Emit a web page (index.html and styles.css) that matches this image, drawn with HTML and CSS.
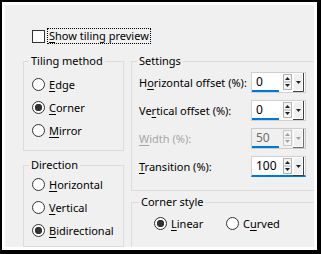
FILE: index.html
```html
<!DOCTYPE html>
<html lang="en">
<head>
    <meta charset="UTF-8">
    <title>Tiling</title>
    <link rel="stylesheet" href="styles.css">
</head>
<body>

    <div class="frame">
        <div class="panel">

            <div class="check-row">
                <span class="checkbox"></span>
                <span class="focus"><u>S</u>how tiling preview</span>
            </div>

            <div class="groups">
                <div class="col">
                    <fieldset class="group tiling">
                        <legend>Tiling method</legend>
                        <div class="radio-row"><span class="radio"></span><span><u>E</u>dge</span></div>
                        <div class="radio-row"><span class="radio on"></span><span><u>C</u>orner</span></div>
                        <div class="radio-row"><span class="radio"></span><span><u>M</u>irror</span></div>
                    </fieldset>

                    <fieldset class="group direction">
                        <legend>Direction</legend>
                        <div class="radio-row"><span class="radio"></span><span><u>H</u>orizontal</span></div>
                        <div class="radio-row"><span class="radio"></span><span><u>V</u>ertical</span></div>
                        <div class="radio-row"><span class="radio on"></span><span><u>B</u>idirectional</span></div>
                    </fieldset>
                </div>

                <div class="col right">
                    <fieldset class="group settings">
                        <legend>Settings</legend>

                        <div class="field">
                            <span class="label">H<u>o</u>rizontal offset (%):</span>
                            <div class="spin">
                                <span class="spin-val">0</span>
                                <svg class="spin-btns" width="24" height="19" viewBox="0 0 24 19">
                                    <rect x="3.5" y="1.5" width="8" height="15" fill="#f4f4f4" stroke="#b4b4b4"/>
                                    <line x1="4" y1="9" x2="11" y2="9" stroke="#b4b4b4"/>
                                    <path d="M5 7h5l-2.5-3z" fill="#222"/>
                                    <path d="M5 11h5l-2.5 3z" fill="#222"/>
                                    <rect x="13.5" y="0.5" width="9" height="17" fill="#f0f0f0" stroke="#fff"/>
                                    <path d="M23.5 0v18.5H13" fill="none" stroke="#404040"/>
                                    <path d="M16 8h5l-2.5 3z" fill="#222"/>
                                </svg>
                            </div>
                        </div>

                        <div class="field">
                            <span class="label">Ve<u>r</u>tical offset (%):</span>
                            <div class="spin">
                                <span class="spin-val">0</span>
                                <svg class="spin-btns" width="24" height="19" viewBox="0 0 24 19">
                                    <rect x="3.5" y="1.5" width="8" height="15" fill="#f4f4f4" stroke="#b4b4b4"/>
                                    <line x1="4" y1="9" x2="11" y2="9" stroke="#b4b4b4"/>
                                    <path d="M5 7h5l-2.5-3z" fill="#222"/>
                                    <path d="M5 11h5l-2.5 3z" fill="#222"/>
                                    <rect x="13.5" y="0.5" width="9" height="17" fill="#f0f0f0" stroke="#fff"/>
                                    <path d="M23.5 0v18.5H13" fill="none" stroke="#404040"/>
                                    <path d="M16 8h5l-2.5 3z" fill="#222"/>
                                </svg>
                            </div>
                        </div>

                        <div class="field disabled">
                            <span class="label"><u>W</u>idth (%):</span>
                            <div class="spin">
                                <span class="spin-val">50</span>
                                <svg class="spin-btns" width="24" height="19" viewBox="0 0 24 19">
                                    <rect x="3.5" y="1.5" width="8" height="15" fill="#f4f4f4" stroke="#c8c8c8"/>
                                    <line x1="4" y1="9" x2="11" y2="9" stroke="#c8c8c8"/>
                                    <path d="M5 7h5l-2.5-3z" fill="#a0a0a0"/>
                                    <path d="M5 11h5l-2.5 3z" fill="#a0a0a0"/>
                                    <rect x="13.5" y="0.5" width="9" height="17" fill="#f0f0f0" stroke="#fff"/>
                                    <path d="M23.5 0v18.5H13" fill="none" stroke="#6d6d6d"/>
                                    <path d="M16 8h5l-2.5 3z" fill="#a0a0a0"/>
                                </svg>
                            </div>
                        </div>

                        <div class="field">
                            <span class="label"><u>T</u>ransition (%):</span>
                            <div class="spin focused">
                                <span class="spin-val">100</span>
                                <svg class="spin-btns" width="24" height="19" viewBox="0 0 24 19">
                                    <rect x="3.5" y="1.5" width="8" height="15" fill="#f4f4f4" stroke="#b4b4b4"/>
                                    <line x1="4" y1="9" x2="11" y2="9" stroke="#b4b4b4"/>
                                    <path d="M5 7h5l-2.5-3z" fill="#222"/>
                                    <path d="M5 11h5l-2.5 3z" fill="#222"/>
                                    <rect x="13.5" y="0.5" width="9" height="17" fill="#f0f0f0" stroke="#fff"/>
                                    <path d="M23.5 0v18.5H13" fill="none" stroke="#404040"/>
                                    <path d="M16 8h5l-2.5 3z" fill="#222"/>
                                </svg>
                            </div>
                        </div>
                    </fieldset>

                    <fieldset class="group corner">
                        <legend>Corner style</legend>
                        <div class="inline-radios">
                            <div class="radio-row"><span class="radio on"></span><span><u>L</u>inear</span></div>
                            <div class="radio-row"><span class="radio"></span><span>C<u>u</u>rved</span></div>
                        </div>
                    </fieldset>
                </div>
            </div>

        </div>
    </div>

</body>
</html>
```

FILE: styles.css
```css
* {
    margin: 0;
    padding: 0;
    box-sizing: border-box;
    font-family: "Noto Sans", "Open Sans", sans-serif;
}

body {
    width: 321px;
    height: 254px;
    overflow: hidden;
    background-color: #fff;
    font-size: 11px;
    color: #000;
}

u {
    text-decoration-thickness: 1px;
    text-underline-offset: 2px;
}

.frame {
    width: 321px;
    height: 254px;
    border-style: solid;
    border-color: #000;
    border-width: 2px 4px 4px 2px;
    padding: 3px;
    background-color: #fff;
}

.panel {
    height: 100%;
    background-color: #f0f0f0;
    padding-left: 18px;
    overflow: hidden;
}

/* checkbox line */
.check-row {
    display: flex;
    align-items: center;
    height: 16px;
    margin-top: 23px;
    margin-left: 9px;
}

.checkbox {
    width: 13px;
    height: 13px;
    border: 1px solid #333;
    background-color: #fff;
}

.focus {
    margin-left: 2px;
    padding: 0 1px;
    line-height: 14px;
    border: 1px dotted #000;
}

/* group boxes */
.groups {
    display: grid;
    grid-template-columns: 101px 188px;
    column-gap: 7px;
    margin-top: 9px;
}

.col {
    display: flex;
    flex-direction: column;
    gap: 6px;
}

.col.right {
    gap: 3px;
}

.group {
    border: 1px solid #dcdcdc;
    padding: 0 0 0 7px;
}

.group legend {
    line-height: 16px;
    padding: 0 2px;
    margin-left: -2px;
}

.tiling {
    height: 98px;
    padding-top: 4px;
}

.direction {
    height: 90px;
}

.settings {
    height: 138px;
    padding-top: 3px;
}

.corner {
    height: 60px;
    padding-left: 9px;
    padding-top: 2px;
}

/* radios */
.radio-row {
    display: flex;
    align-items: center;
    gap: 4px;
    height: 23px;
    margin-left: 1px;
}

.radio {
    width: 13px;
    height: 13px;
    border: 1px solid #333;
    border-radius: 50%;
    background-color: #fff;
    flex-shrink: 0;
}

.radio.on {
    background: radial-gradient(circle, #333 3.4px, #fff 4px);
}

.inline-radios {
    display: flex;
    margin-left: 13px;
}

.inline-radios .radio-row {
    width: 72px;
    margin-left: 0;
}

/* spin fields */
.field {
    display: flex;
    align-items: center;
    height: 21px;
    margin-bottom: 7px;
}

.field .label {
    width: 112px;
}

.spin {
    display: flex;
    width: 55px;
    height: 21px;
    border: 1px solid #d0d0d0;
    background-color: #fff;
}

.spin-val {
    width: 27px;
    height: 19px;
    padding-left: 4px;
    line-height: 18px;
    font-size: 12px;
    border-bottom: 2px solid #0078d7;
}

.spin-btns {
    display: block;
    margin-left: 1px;
}

.field.disabled .label {
    color: #a6a6a6;
}

.field.disabled .spin {
    background-color: #f0f0f0;
    border-color: #cccccc;
}

.field.disabled .spin-val {
    color: #6d6d6d;
}

.spin.focused {
    border-bottom: 2px solid #0078d7;
}

.spin.focused .spin-val {
    border-bottom: none;
}
```
